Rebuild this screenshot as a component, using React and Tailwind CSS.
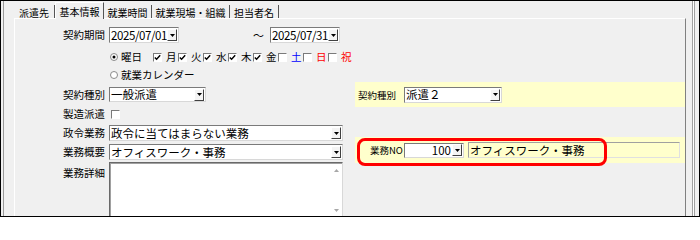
import React from 'react';

const FONT = "font-['Noto_Sans_CJK_JP','Noto_Sans',sans-serif]";

function DropButton() {
  return (
    <div className="w-[10px] h-[12px] mr-px shrink-0 flex items-center justify-center bg-[#f4f4f4] border-t border-l border-white border-r border-b border-r-[#404040] border-b-[#404040]">
      <svg width="5" height="3" viewBox="0 0 5 3">
        <path d="M0 0h5L2.5 3z" fill="#000" />
      </svg>
    </div>
  );
}

// sunken combo box (text + small drop button)
function Combo({ className = '', children, right = false, textClass = '' }) {
  return (
    <div className={`flex items-center bg-white border border-t-[#7a7a7a] border-l-[#7a7a7a] border-r-[#d8d8d8] border-b-[#d8d8d8] shrink-0 ${className}`}>
      <span className={`flex-1 min-w-0 px-px text-[11.5px] leading-[13px] text-black whitespace-nowrap ${right ? 'text-right pr-[1px]' : ''} ${textClass}`}>
        {children}
      </span>
      <DropButton />
    </div>
  );
}

function Label({ children }) {
  return <div className="w-[90px] shrink-0 text-right text-[10.5px] leading-[12px] text-black">{children}</div>;
}

function Check({ checked }) {
  return (
    <div className="w-[9px] h-[9px] shrink-0 bg-white border border-t-[#7a7a7a] border-l-[#7a7a7a] border-r-white border-b-white flex items-center justify-center">
      {checked && (
        <svg width="7" height="7" viewBox="0 0 7 7">
          <path d="M0.8 3.4 L2.6 5.3 L6.2 1.2" stroke="#000" strokeWidth="1.4" fill="none" />
        </svg>
      )}
    </div>
  );
}

function Radio({ checked }) {
  return (
    <svg width="8" height="8" viewBox="0 0 8 8" className="shrink-0">
      <circle cx="4" cy="4" r="3.5" fill="#fff" stroke="#8a8a8a" />
      {checked && <circle cx="4" cy="4" r="1.5" fill="#000" />}
    </svg>
  );
}

const days = [
  { c: '月', on: true, color: 'text-black' },
  { c: '火', on: true, color: 'text-black' },
  { c: '水', on: true, color: 'text-black' },
  { c: '木', on: true, color: 'text-black' },
  { c: '金', on: true, color: 'text-black' },
  { c: '土', on: false, color: 'text-[#0000ff]' },
  { c: '日', on: false, color: 'text-[#ff0000]' },
  { c: '祝', on: false, color: 'text-[#ff0000]' },
];

const tabs = [
  { t: '派遣先', w: 'w-[41px]' },
  { t: '基本情報', w: 'w-[49px]', active: true },
  { t: '就業時間', w: 'w-[48px]' },
  { t: '就業現場・組織', w: 'w-[78px]' },
  { t: '担当者名', w: 'w-[49px]' },
];

export default function App() {
  return (
    <div className={`w-[700px] h-[217px] bg-[#f0f0f0] border border-black flex overflow-hidden ${FONT}`}>
      {/* left edge */}
      <div className="w-[13px] shrink-0 flex">
        <div className="ml-[2px] w-px bg-[#9a9a9a]" />
      </div>

      {/* main */}
      <div className="w-[672px] shrink-0 flex flex-col">
        {/* tabs */}
        <div className="h-[17px] shrink-0 flex items-end">
          {tabs.map((tab) =>
            tab.active ? (
              <div
                key={tab.t}
                className={`${tab.w} h-[17px] -mb-px relative z-10 bg-[#f0f0f0] border-l border-t border-white border-r border-r-[#555] flex items-center justify-center pt-[1px] text-[10px] leading-[12px] text-black`}
              >
                {tab.t}
              </div>
            ) : (
              <div
                key={tab.t}
                className={`${tab.w} h-[13px] border-r border-[#555] flex items-center justify-center pt-[2px] text-[10px] leading-[11px] text-black`}
              >
                {tab.t}
              </div>
            )
          )}
        </div>

        {/* panel */}
        <div className="flex-1 min-h-0 flex border-t border-l border-white border-r border-r-[#808080] overflow-hidden">
          {/* left column */}
          <div className="w-[340px] shrink-0 flex flex-col">
            <div className="mt-[8px] h-[16px] shrink-0 flex items-center">
              <Label>契約期間</Label>
              <Combo className="ml-[4px] w-[70px] h-[16px]" textClass="tracking-[-0.4px]">2025/07/01</Combo>
              <span className="ml-[74px] text-[11px] leading-[12px] text-black">～</span>
              <Combo className="ml-[6px] w-[70px] h-[16px]" textClass="tracking-[-0.4px]">2025/07/31</Combo>
            </div>

            <div className="mt-[6px] h-[16px] shrink-0 flex items-center">
              <div className="w-[95px] shrink-0" />
              <Radio checked />
              <span className="ml-[3px] text-[10.5px] leading-[12px] text-black">曜日</span>
              <div className="ml-[11px] flex">
                {days.map((d) => (
                  <div key={d.c} className="w-[25px] flex items-center">
                    <Check checked={d.on} />
                    <span className={`ml-[4px] text-[10.5px] leading-[12px] ${d.color}`}>{d.c}</span>
                  </div>
                ))}
              </div>
            </div>

            <div className="mt-[3px] h-[14px] shrink-0 flex items-center">
              <div className="w-[95px] shrink-0" />
              <Radio />
              <span className="ml-[3px] text-[10.5px] leading-[12px] text-black">就業カレンダー</span>
            </div>

            <div className="h-[25px] shrink-0 flex items-center">
              <Label>契約種別</Label>
              <Combo className="ml-[4px] w-[97px] h-[15px]">一般派遣</Combo>
            </div>

            <div className="h-[14px] shrink-0 flex items-center">
              <Label>製造派遣</Label>
              <div className="ml-[6px]">
                <Check />
              </div>
            </div>

            <div className="mt-[4px] h-[16px] shrink-0 flex items-center">
              <Label>政令業務</Label>
              <Combo className="ml-[4px] w-[234px] h-[16px]">政令に当てはまらない業務</Combo>
            </div>

            <div className="mt-[3px] h-[16px] shrink-0 flex items-center">
              <Label>業務概要</Label>
              <Combo className="ml-[4px] w-[234px] h-[16px]">オフィスワーク・事務</Combo>
            </div>

            <div className="mt-[2px] shrink-0 flex items-start">
              <div className="pt-[5px]">
                <Label>業務詳細</Label>
              </div>
              <div className="ml-[4px] w-[234px] h-[70px] shrink-0 bg-white border border-t-[#696969] border-l-[#696969] border-r-[#d8d8d8] border-b-[#d8d8d8] shadow-[inset_1px_1px_0_#a0a0a0] flex justify-end">
                <div className="w-[12px] flex flex-col items-center pt-[6px]">
                  <svg width="5" height="3" viewBox="0 0 5 3">
                    <path d="M2.5 0L5 3H0z" fill="#a8a8a8" />
                  </svg>
                  <svg width="5" height="3" viewBox="0 0 5 3" className="mt-[37px]">
                    <path d="M0 0h5L2.5 3z" fill="#a8a8a8" />
                  </svg>
                </div>
              </div>
            </div>
          </div>

          {/* right column */}
          <div className="flex-1 flex flex-col">
            <div className="mt-[63px] h-[25px] shrink-0 bg-[#ffffcc] flex items-center">
              <div className="w-[49px] shrink-0 pl-[3px] pt-[2px] text-[9.5px] leading-[11px] text-black">契約種別</div>
              <Combo className="w-[98px] h-[16px]">派遣２</Combo>
            </div>

            <div className="mt-[30px] h-[26px] shrink-0 bg-[#ffffcc] flex items-center relative">
              <div className="w-[49px] shrink-0 pl-[15px] text-[9.5px] leading-[11px] text-black whitespace-nowrap">業務NO</div>
              <Combo className="w-[60px] h-[15px]" right>100</Combo>
              <div className="ml-[4px] w-[212px] h-[16px] shrink-0 flex items-center bg-[#ffffcc] border border-t-[#a0a0a0] border-l-[#a0a0a0] border-r-[#e0e0e0] border-b-[#e0e0e0]">
                <span className="px-px text-[11.5px] leading-[13px] text-black whitespace-nowrap">オフィスワーク・事務</span>
              </div>
              <div className="absolute left-[2px] top-[1px] w-[250px] h-[28px] border-[3px] border-[#ff0000] rounded-[8px]" />
            </div>
          </div>
        </div>
      </div>

      {/* right edge */}
      <div className="flex-1 flex">
        <div className="ml-[6px] w-px bg-[#a0a0a0]" />
        <div className="w-px bg-white" />
        <div className="w-px bg-[#a0a0a0]" />
      </div>
    </div>
  );
}
